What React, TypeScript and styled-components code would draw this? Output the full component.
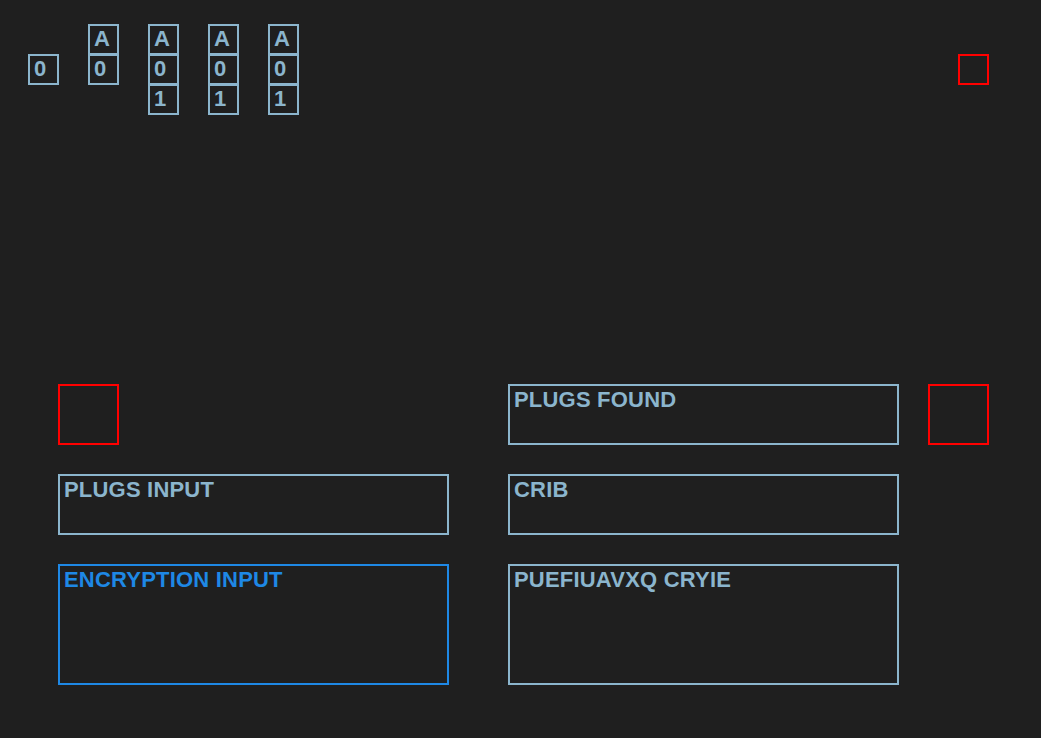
import React from "react";
import styled, { createGlobalStyle } from "styled-components";

const Global = createGlobalStyle`
  html, body {
    margin: 0;
    padding: 0;
    background: #1f1f1f;
    font-family: "Liberation Sans", Arial, sans-serif;
  }
  #root { min-height: 738px; }
`;

const Board = styled.div`
  display: grid;
  grid-template-columns: repeat(32, 30px);
  grid-auto-rows: 30px;
  padding: 24px 0 0 28px;
`;

type Place = { $col: number; $row: number; $w?: number; $h?: number };

const Box = styled.div<Place & { $tone?: "plain" | "red" | "active" }>`
  grid-column: ${(p) => p.$col + 1} / span ${(p) => p.$w ?? 1};
  grid-row: ${(p) => p.$row + 1} / span ${(p) => p.$h ?? 1};
  box-sizing: border-box;
  width: calc(100% + 1px);
  height: calc(100% + 1px);
  border: 2px solid
    ${(p) =>
      p.$tone === "red" ? "#ff0000" : p.$tone === "active" ? "#1e88e5" : "#8bb5cd"};
  color: ${(p) => (p.$tone === "active" ? "#1e88e5" : "#8bb5cd")};
  font-weight: 700;
  font-size: 22px;
  line-height: 22px;
  letter-spacing: 0.2px;
  padding: 2px 4px;
  white-space: nowrap;
  overflow: hidden;
`;

const Panel = styled(Box)`
  padding: 3px 4px;
`;

const columns: { col: number; values: string[] }[] = [
  { col: 2, values: ["A", "0"] },
  { col: 4, values: ["A", "0", "1"] },
  { col: 6, values: ["A", "0", "1"] },
  { col: 8, values: ["A", "0", "1"] },
];

export default function App() {
  return (
    <>
      <Global />
      <Board>
        <Box $col={0} $row={1}>0</Box>
        {columns.map((c) =>
          c.values.map((v, i) => (
            <Box key={`${c.col}-${i}`} $col={c.col} $row={i}>
              {v}
            </Box>
          ))
        )}
        <Box $col={31} $row={1} $tone="red" />

        <Box $col={1} $row={12} $w={2} $h={2} $tone="red" />
        <Panel $col={16} $row={12} $w={13} $h={2}>PLUGS FOUND</Panel>
        <Box $col={30} $row={12} $w={2} $h={2} $tone="red" />

        <Panel $col={1} $row={15} $w={13} $h={2}>PLUGS INPUT</Panel>
        <Panel $col={16} $row={15} $w={13} $h={2}>CRIB</Panel>

        <Panel $col={1} $row={18} $w={13} $h={4} $tone="active">ENCRYPTION INPUT</Panel>
        <Panel $col={16} $row={18} $w={13} $h={4}>PUEFIUAVXQ CRYIE</Panel>
      </Board>
    </>
  );
}
